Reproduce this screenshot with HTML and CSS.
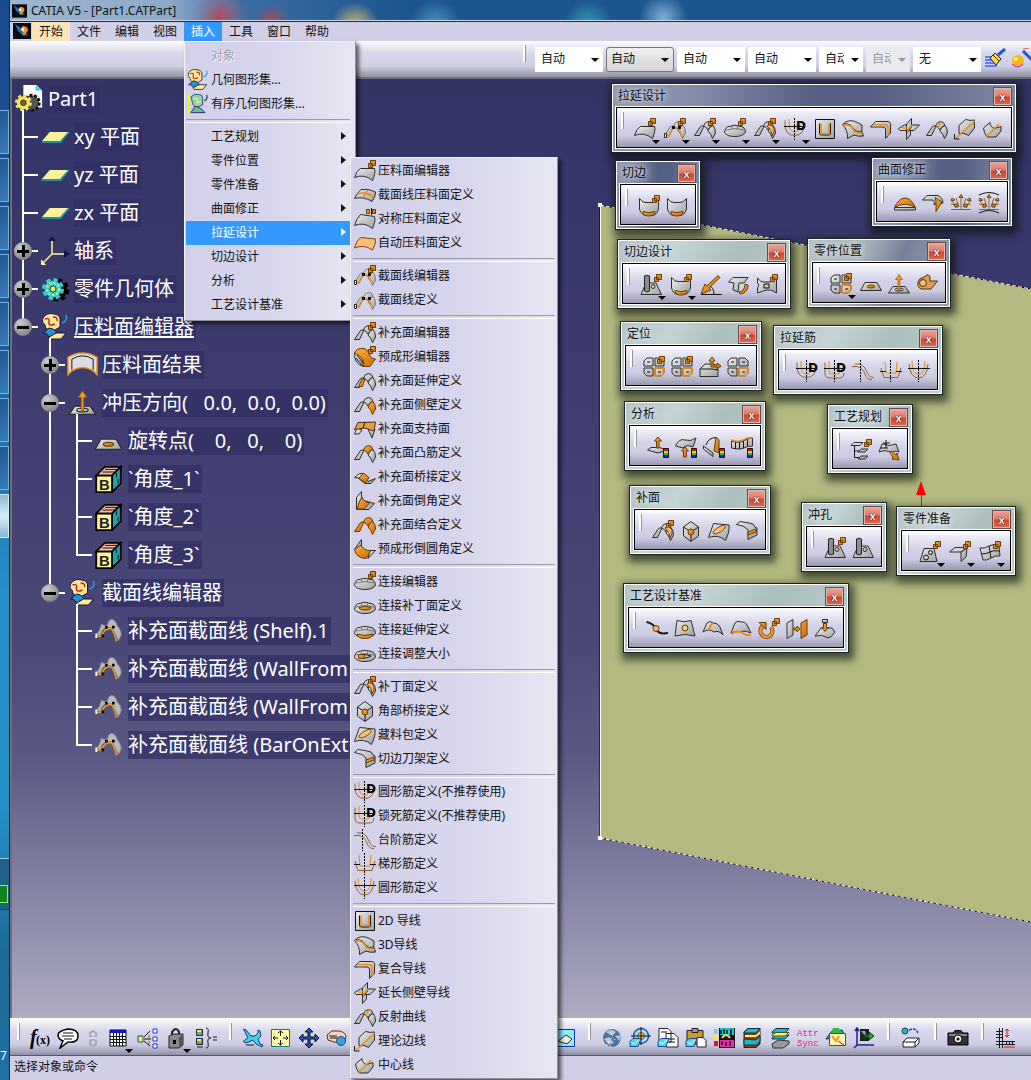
FILE: index.html
```html
<!DOCTYPE html>
<html lang="zh-CN">
<head>
  <meta charset="UTF-8">
  <meta name="viewport" content="width=device-width, initial-scale=1.0">
  <title>CATIA V5 - [Part1.CATPart]</title>
  <link rel="stylesheet" href="styles.css">
</head>
<body>

<svg class="paints" aria-hidden="true">
  <defs>
    <linearGradient id="steel" x1="0" y1="0" x2="1" y2="1"><stop offset="0" stop-color="#ececec"/><stop offset="1" stop-color="#9f9f9f"/></linearGradient>
    <linearGradient id="amber" x1="0" y1="0" x2="1" y2="1"><stop offset="0" stop-color="#ffb03a"/><stop offset="1" stop-color="#c96a00"/></linearGradient>
  </defs>
</svg>

<!-- 图标 -->
<svg class="sprite" aria-hidden="true">
  <defs>
    <g id="cubes"><path class="o" d="M16.500 .5h5v5h-5zM14.500 3.500h4v4h-4z"/></g>
    <g id="legL"><path d="M.5 17.500L6.500 8.500Q8 7.500 10 8L5.500 17.500z"/></g>
    <g id="arch"><path d="M9.500 8Q11 3.500 14.500 3.500Q18 3.500 19 7.500Q15.500 8 14 12Q12.500 9 9.500 8z"/></g>
    <g id="legR"><path d="M19 7.500Q21.500 10 21.500 15L18.500 20.500Q17 15.500 14 13Q15.500 8 19 7.500z"/></g>
    <g id="rainbow"><path fill="red" d="M17 13h4v3h-4z"/><path fill="#fd0" d="M17 15h4v2h-4z"/><path fill="#0c4" d="M17 17h4v2h-4z"/><path fill="#11f" d="M17 19h4v2h-4z"/><path class="l" d="M16.500 12.500h5v9h-5z"/></g>
    <g id="mail"><path fill="#55d4ec" stroke="#124a9a" d="M1 14.500L4 11.500h8L9 19.500H1z"/><path fill="none" stroke="#fff" d="M2 15l3 2 5-4"/></g>
  </defs>

  <symbol id="i-app" viewBox="0 0 18 16"><path fill="#070b16" d="M0 0h18v16H0z"/><path fill="#2c6ea8" d="M2 1L8 5L15 12L11 13L5 8z"/><path fill="#ff8a1c" d="M9 3Q15 3 15 7Q13 12 9 12Q12 8 9 3z"/><path fill="#fff4c0" d="M9 4Q12 5 11 9L8 7z"/></symbol>
  <symbol id="i-sheet-ed" viewBox="0 0 22 22"><path class="g" d="M.5 17.500Q2 11 6.500 8.500L20.500 8.500Q22 12 18.500 20.500Q10 13.500 .5 17.500z"/><use href="#cubes"/></symbol>
  <symbol id="i-sheet-cross" viewBox="0 0 22 22"><path class="g" d="M.5 14.500Q3 9 7 5.500Q14 4 21.500 8Q21.500 13 18 17.500Q9 12 .5 14.500z"/><path class="ol" d="M3.500 10Q12 7 20 13M14 6Q10.500 9 9.500 14"/></symbol>
  <symbol id="i-sheet-sym" viewBox="0 0 22 22"><path class="g" d="M.5 17.500Q2 11 6.500 6.500L20.500 8.500Q22 12 18.500 20.500Q10 13.500 .5 17.500z"/><path class="o" d="M12.500 1.500h3v4h-3zM18.500 1.500h3v4h-3z"/><path class="l" d="M17.500 0v7"/></symbol>
  <symbol id="i-sheet-auto" viewBox="0 0 22 22"><path fill="#f9bd74" stroke="#7a4a10" d="M.5 16Q2 9 6.500 5.500L21.500 7Q22 12 18.500 18Q10 12 .5 16z"/></symbol>
  <symbol id="i-sec" viewBox="0 0 22 22"><g class="g soft"><use href="#legL"/><use href="#arch"/><use href="#legR"/></g><path class="ol" d="M2 18h3L9 10h6L18 19"/><path fill="#111" d="M8 8h3v3H8zM14 8h3v3h-3z"/><path fill="#fff" stroke="#222" d="M.5 15.500h2v4h-2z"/></symbol>
  <symbol id="i-sec-ed" viewBox="0 0 22 22"><use href="#i-sec"/><use href="#cubes"/></symbol>
  <symbol id="i-add-ed" viewBox="0 0 22 22"><g class="g"><use href="#legL"/><use href="#arch"/><use href="#legR"/></g><use href="#cubes"/></symbol>
  <symbol id="i-preform" viewBox="0 0 22 22"><path class="g" d="M.5 7Q10 8 9.500 20.500Q0 18 .5 7z"/><path class="l" d="M2 12l6 7M3 9l6 8"/><path class="o" d="M.5 7Q3 1.500 10 2.500Q15 4 16 10Q18 13 21.500 13L16 20.500H9Q12 12 .5 7z"/><use href="#cubes"/></symbol>
  <symbol id="i-add-ext" viewBox="0 0 22 22"><g class="g"><use href="#legL"/><use href="#arch"/><use href="#legR"/></g><path class="o" d="M4.500 16.500L8 9h3L8.500 16.500z"/></symbol>
  <symbol id="i-add-wall" viewBox="0 0 22 22"><g class="g"><use href="#legL"/><use href="#arch"/></g><g class="o"><use href="#legR"/></g></symbol>
  <symbol id="i-add-sup" viewBox="0 0 22 22"><path class="g" d="M3 10L.5 16H5L8 12zM14 11l4 9 3-9z"/><path fill="#e0a04a" stroke="#4f3210" d="M4 4.500L21.500 4L20 13L11 10L.5 11.500z"/><path class="l" d="M11 4l-2 6"/></symbol>
  <symbol id="i-add-bar" viewBox="0 0 22 22"><g class="g"><use href="#legL"/><use href="#legR"/></g><g class="o"><use href="#arch"/></g></symbol>
  <symbol id="i-add-bridge" viewBox="0 0 22 22"><path class="g" d="M.5 11.500L5.500 7.500H9L14 15.500L21.500 12.500L17 17.500H11L4 12z"/><path class="o" d="M9.500 7L15 11.500L11.500 17L5 12z"/></symbol>
  <symbol id="i-add-fillet" viewBox="0 0 22 22"><path class="g" d="M2.500 19.500V7.500L7.500 1.500V10L20.500 13.500L15 19.500z"/><path class="o" d="M8 7Q10 13 16 12.500L10 19H3Q5 11 8 7z"/></symbol>
  <symbol id="i-add-join" viewBox="0 0 22 22"><g class="o"><use href="#legL"/><use href="#arch"/><use href="#legR"/></g></symbol>
  <symbol id="i-add-round" viewBox="0 0 22 22"><path class="g" d="M.5 11.500L7.500 1.500V9z"/><path class="g" d="M16 12.500h5.500L14 20.500z"/><path class="o" d="M.5 11.500L7 7Q10 13 17 12.500L12 20.500Q2 20 .5 11.500z"/></symbol>
  <symbol id="i-con" viewBox="0 0 22 22"><path class="g" d="M.5 14.500Q1 9 5 8.500Q11 6 17 8.500Q21 9 21.500 14Q19 18.500 11 18.500Q3 18.500 .5 14.500z"/><path class="l soft" d="M2 12Q11 9 20 12M7 8l1 3M14 8l-1 3"/></symbol>
  <symbol id="i-con-ed" viewBox="0 0 22 22"><use href="#i-con"/><use href="#cubes"/></symbol>
  <symbol id="i-con-patch" viewBox="0 0 22 22"><use href="#i-con"/><path class="o" d="M5 12.500Q11 10 17 12.500Q17 15 11 15Q5 15 5 12.500z"/></symbol>
  <symbol id="i-con-ext" viewBox="0 0 22 22"><use href="#i-con"/><path class="o" d="M3 15Q11 18 19 15Q18 19.500 11 19.500Q4 19.500 3 15z"/></symbol>
  <symbol id="i-con-size" viewBox="0 0 22 22"><use href="#i-con"/><path class="l" d="M6 13Q11 10 17 13Q11 17 6 13z"/><path class="o" d="M4.500 11.500h6v4h-6z"/></symbol>
  <symbol id="i-patch" viewBox="0 0 22 22"><use href="#i-add-ed"/><path fill="#f3b36b" stroke="#6b4010" d="M13 8Q17 5 20 10Q21 13 18 18Q18 12 13 8z"/></symbol>
  <symbol id="i-corner" viewBox="0 0 22 22"><path class="g" d="M11 1.500L18.500 7V16L11 21.500L3.500 16V7z"/><path class="l" d="M3.500 7L11 12L18.500 7M11 12v9"/><circle class="o" cx="11" cy="12" r="3"/></symbol>
  <symbol id="i-pocket" viewBox="0 0 22 22"><path class="g" d="M.5 17.500L5.500 3.500L21 5Q22 11 17.500 20.500Q10 14 .5 17.500z"/><path fill="#f8bd76" stroke="#7a4a10" d="M5 12Q7 8 14 5.500Q18 5 17 8Q14 12 8 14Q4 14 5 12z"/></symbol>
  <symbol id="i-knife" viewBox="0 0 22 22"><path class="g" d="M.5 4.500L4 1.500L13 3Q18 3 19 7L21 8V15L12 19.500V10L8 6.500z"/><path class="o" d="M12 12l8-3v3l-8 3z"/></symbol>
  <symbol id="i-beadD" viewBox="0 0 22 22"><path class="bl" d="M1 2.500v3Q1 17.500 10.500 17.500T20 6"/><path class="ol thin" d="M5 1v4Q5 14 10.500 14T16 6"/><path class="l" d="M0 8.500h20"/><path class="dash" d="M10.500 0v22"/><text class="iconD" x="12" y="12">D</text></symbol>
  <symbol id="i-lockD" viewBox="0 0 22 22"><path class="bl" d="M1 2.500V13Q1 18 6 18H15Q20 18 20 13"/><path class="ol thin" d="M5 1v10q0 3 3 3h5q3 0 3-3"/><path class="l" d="M0 8.500h20"/><path class="dash" d="M10.500 0v22"/><text class="iconD" x="12" y="12">D</text></symbol>
  <symbol id="i-step" viewBox="0 0 22 22"><path class="bl" d="M0 6.500H5Q11 8 13 14T20 19.500M3 4h5Q13 6 15 12T22 17.500"/><path class="dash" d="M8.500 0v22"/></symbol>
  <symbol id="i-trap" viewBox="0 0 22 22"><path class="ol thin" d="M5 2L6 13h10l1-11"/><path class="bl" d="M1 8L4 17.500H18L21 8"/><path class="l" d="M0 11.500h6M16 11.500h6"/><path class="dash" d="M10.500 0v22"/></symbol>
  <symbol id="i-bead" viewBox="0 0 22 22"><path class="bl" d="M1 4Q2 17.500 10.500 18Q19 17.500 20 4"/><path class="ol thin" d="M4 1Q4 14 10.500 14.500Q17 14 17 1"/><path class="l" d="M0 8.500h22"/><path class="dash" d="M10.500 0v22"/></symbol>
  <symbol id="i-2d" viewBox="0 0 22 22"><path fill="url(#steel)" stroke="#111" d="M1.500 1.500h19v19h-19z"/><path class="l" d="M5.500 5.500V15q0 2 2 2H14.500q2 0 2-2V5"/><path class="ol" d="M7 5.500V15.500H15V5.500"/></symbol>
  <symbol id="i-3d" viewBox="0 0 22 22"><path class="g" d="M.5 6.500Q7 0 15.500 4.500L20 7Q19 14 21.500 18Q16 19 12 17L5.500 20.500Q6 12 .5 6.500z"/><path class="l" d="M2 6Q8 5 11 10T20 13"/><path class="ol" d="M2 7Q8 6 11 11T20 14"/></symbol>
  <symbol id="i-comp" viewBox="0 0 22 22"><path class="g" d="M.5 9L5.500 3.500H18Q21.500 4 20.500 9V15L15.500 20.500V11Q15 8.500 12 9z"/><path class="ol" d="M3 6.500H15Q18 7 18 11v7"/></symbol>
  <symbol id="i-wallline" viewBox="0 0 22 22"><path class="g" d="M.5 10.500L6.500 7H21.500L16 12.500H2zM8.500 12.500L12.500 12V17L8.500 21.500z"/><path class="g" d="M13.500 .5V9L8.500 15V6z"/><path class="ol" d="M14 7l-5 6M4 10h5"/></symbol>
  <symbol id="i-reflect" viewBox="0 0 22 22"><g class="g"><use href="#legL"/><use href="#arch"/><use href="#legR"/></g><path class="ol" d="M12 10Q13 4 17 3.500"/></symbol>
  <symbol id="i-theory" viewBox="0 0 22 22"><path class="g" d="M5 7.500L11.500 1.500Q16 3 20.500 2V10L14.500 17.500Q10 14 5 15.500z"/><path class="ol" d="M2 20L21 3"/><path class="l" d="M.5 16v5h5"/></symbol>
  <symbol id="i-center" viewBox="0 0 22 22"><path class="g" d="M1.500 10L8 4.500Q8 9 12.500 10.500L19 8.500V13L14 19H5Q2 15 1.500 10z"/><path class="ol" d="M4 19L17 6"/></symbol>

  <symbol id="i-trim" viewBox="0 0 22 22"><path class="g" d="M1.500 3.500Q5 8 8 7.500H14Q17 8 20.500 3.500V14Q19 20 14 20.500H8Q3 20 1.500 14z"/><path class="o" d="M5 16.500Q11 19 17 16.500Q17 21 11 21T5 16.500z"/></symbol>
  <symbol id="i-trim-ed" viewBox="0 0 22 22"><use href="#i-trim"/><use href="#cubes"/></symbol>
  <symbol id="i-dome" viewBox="0 0 22 22"><path class="g" d="M.5 15.500h21v2.500h-21z"/><path class="o" d="M.5 15.500Q5 6 11 6T21.500 15.500Q11 9 .5 15.500z"/></symbol>
  <symbol id="i-turn" viewBox="0 0 22 22"><path class="g" d="M.5 8L5 3.500H16Q21 6 21 11L12 12.500Q13 8 10 8z"/><path class="o" d="M13 5.500L20 10L14 19.500V9z"/></symbol>
  <symbol id="i-morph" viewBox="0 0 22 22"><path class="bn" d="M1 17.500h20M2 8l4 8M20 8l-4 8M11 4v13M6 6l3 9M16 6l-3 9M1 12l4 1M21 12l-4 1"/><path fill="#d79237" stroke="#6e4413" d="M9 5.500l2-3 2 3zM1 9l1-3 3 2zM21 9l-1-3-3 2zM5 12h3v3H5zM14 12h3v3h-3z"/></symbol>
  <symbol id="i-morph2" viewBox="0 0 22 22"><use href="#i-morph"/><path class="l" d="M1 3Q11-2 21 3M1 21Q11 16 21 21"/></symbol>
  <symbol id="i-pierce" viewBox="0 0 22 22"><path class="g" d="M1 20.500L6 9H16L21.500 20.500z"/><circle class="g" cx="13" cy="12.500" r="2"/><path fill="#8d8d8d" stroke="#222" d="M4.500 2Q7 .5 9.500 2V17Q7 19 4.500 17z"/></symbol>
  <symbol id="i-pierce-ed" viewBox="0 0 22 22"><use href="#i-pierce"/><use href="#cubes"/></symbol>
  <symbol id="i-angle" viewBox="0 0 22 22"><path class="l" d="M1 20.500h21M9 11Q14 14 14 20"/><path class="o" d="M18 1.500L7 12L5 10L1 20L11 16L9 14L20 3.500z"/></symbol>
  <symbol id="i-fold" viewBox="0 0 22 22"><path class="g" d="M.5 8L5 3.500H20L16 9H11L10 18L5 16L6 9z"/><path class="o" d="M11 18Q17 17 17 10l3 1Q20 19 12 20z"/></symbol>
  <symbol id="i-camhole" viewBox="0 0 22 22"><path class="g" d="M1.500 4Q5 9 8 8H14Q17 8 20.500 4V19Q15 15 11 16T1.500 19V14L3 11L1.500 9z"/><path class="l" d="M8 10h5v4H8z"/><use href="#cubes"/></symbol>
  <symbol id="i-quad" viewBox="0 0 22 22"><path class="g" d="M1 5l3-3h6v8H1zM12 2h6l3 3v5h-9zM1 12h9v8H4l-3-3z"/><path class="g" d="M12 12h9v5l-3 3h-6z"/><path class="ol" d="M12 12h9v5l-3 3h-6z"/><path class="l" d="M4 6h3M15 6h3M4 16h3M15 16h3"/></symbol>
  <symbol id="i-quad-ed" viewBox="0 0 22 22"><use href="#i-quad"/><use href="#cubes"/></symbol>
  <symbol id="i-pivot" viewBox="0 0 22 22"><path class="g" d="M.5 17.500L5 9.500H17L21.500 17.500z"/><ellipse class="o" cx="11" cy="13.500" rx="4" ry="1.500"/></symbol>
  <symbol id="i-dir" viewBox="0 0 22 22"><path class="g" d="M.5 20L5 13.500H17L21.500 20z"/><ellipse class="g" cx="11" cy="16.500" rx="4.500" ry="1.500"/><path fill="#f39a25" stroke="#8a4b00" stroke-width=".6" d="M10 17V6.500H7.500L11 1.500L14.500 6.500H12V17z"/></symbol>
  <symbol id="i-roll" viewBox="0 0 22 22"><path fill="#dba050" stroke="#4f3210" d="M2 9Q3 5 8 4L12 1.500Q15 3 14 8H21.500L15 16H5Q1 14 2 9z"/><circle fill="#eebf7c" stroke="#4f3210" cx="7" cy="10" r="3.500"/></symbol>
  <symbol id="i-box" viewBox="0 0 22 22"><path class="g" d="M1 13L6 8H15L19 13V20.500H1z"/><path class="l" d="M1 13h12l6 1"/><path class="o" d="M12 11V5h-2l3-4 3 4h-2v4h4v-2l4 3-4 3v-2z"/></symbol>
  <symbol id="i-an1" viewBox="0 0 22 22"><path class="g" d="M.5 14L4 11.500H12L21 14L11 17z"/><path class="o" d="M9.500 12V5H7.500L11 1l3.500 4H12v7z"/><use href="#rainbow"/></symbol>
  <symbol id="i-an2" viewBox="0 0 22 22"><path class="g" d="M.5 10Q4 2 10 4T21 2L18 11Q11 8 8 12z"/><path class="o" d="M8.500 21v-6H6.500L10 11l3.500 4H11.500v6z"/><use href="#rainbow"/></symbol>
  <symbol id="i-an3" viewBox="0 0 22 22"><path class="g" d="M.5 10L10 17V20.500L.5 13z"/><path class="l" d="M3 9Q5 2 13 1.500"/><path class="o" d="M13 1l3 3v13l-5-2z"/><use href="#rainbow"/></symbol>
  <symbol id="i-an4" viewBox="0 0 22 22"><path class="g" d="M.5 12V5Q8 8 14 4Q18 2 21.500 2V10Q16 10 13 12T.5 12z"/><path class="ol" d="M.5 4Q8 7 14 3Q18 1 21.500 2"/><path class="l" d="M4.500 6v7M8.500 6v7M12.500 5v7M16.500 3v7"/><use href="#rainbow"/></symbol>
  <symbol id="i-plan" viewBox="0 0 22 22"><path class="g" d="M1 6.500L4 3.500H13L10 6.500zM8 13l3-3h7l-3 3zM8 20l3-3h7l-3 3z"/><path class="l" d="M4.500 7v11.500H9M4.500 12H9"/><use href="#cubes"/></symbol>
  <symbol id="i-plan2" viewBox="0 0 22 22"><path class="g" d="M1 13L4 5Q12 8 18 5L21 13Q16 11 14 14Q8 10 1 13z"/><path class="l" d="M8 1v8M5 4h7M3 9h7"/><path class="o" d="M13 12l5 4 1-2 2 7-7-1 1-2-3-4z"/></symbol>
  <symbol id="i-prep1" viewBox="0 0 22 22"><path class="g" d="M1 20.500L5 7.500H15L18 20.500z"/><circle class="l" cx="11.500" cy="11.500" r="2"/><circle class="l" cx="7" cy="16.500" r="2.500"/><use href="#cubes"/></symbol>
  <symbol id="i-prep2" viewBox="0 0 22 22"><path class="g" d="M.5 11L6 6.500H18L17 16L12 20.500V11z"/><path class="l" d="M12 11l6-4"/><use href="#cubes"/></symbol>
  <symbol id="i-prep3" viewBox="0 0 22 22"><path class="g" d="M1 7Q6 8 10 5T20 5L21 15Q17 14 12 17T4 19z"/><path class="l" d="M2 13Q8 13 11 11T20 10M10 5l2 12"/><use href="#cubes"/></symbol>
  <symbol id="i-ref1" viewBox="0 0 22 22"><path class="l fat" d="M.5 4Q7 5 10 11T22 15"/><circle fill="#f6b45d" stroke="#69400e" cx="10" cy="10.500" r="3"/></symbol>
  <symbol id="i-ref2" viewBox="0 0 22 22"><path class="g" d="M1 18L3 2.500Q10 5 17 2.500L21 18Q11 15 1 18z"/><circle fill="#f6c27d" stroke="#69400e" cx="11" cy="10" r="3"/></symbol>
  <symbol id="i-ref3" viewBox="0 0 22 22"><path class="g" d="M1 14L5 5Q8 2 11 5Q15 4 18 9L21 17Q17 12 12 14Q7 10 1 14z"/><path class="ol wide" d="M11 5Q7 8 7.500 12"/></symbol>
  <symbol id="i-ref4" viewBox="0 0 22 22"><path class="g" d="M1 15L5 5Q8 2 11 4Q15 3 17 7L21 15Q14 12 11 14Q7 12 1 15z"/><path class="ol wide" d="M1 16Q8 12 12 15T21 17"/></symbol>
  <symbol id="i-ref5" viewBox="0 0 22 22"><path fill="none" stroke="#6d3c00" stroke-width="4" d="M5 8A6 6 0 1 0 13 9"/><path fill="none" stroke="#f39a25" stroke-width="2.500" d="M5 8A6 6 0 1 0 13 9"/><path class="o" d="M1 4.500h7v7z"/><use href="#cubes"/></symbol>
  <symbol id="i-ref6" viewBox="0 0 22 22"><path class="g" d="M1 5L7 1.500V17L1 20.500z"/><path class="o" d="M15 5L21 1.500V17L15 20.500zM8 10h3V8l3 3-3 3v-2H8z"/></symbol>
  <symbol id="i-ref7" viewBox="0 0 22 22"><path class="g" d="M1 18L7 10H18L21 14Q17 20 14 20Q8 16 1 18z"/><path class="g" d="M8.500 1.500h5v3h-5z"/><path class="o" d="M9.500 5.500h3v4h2l-3.500 4-3.500-4h2z"/></symbol>

  <!-- 结构树 -->
  <symbol id="t-part" viewBox="0 0 32 32"><path fill="#fff" d="M10 1h14l6 6v18H14L10 12z"/><path fill="#3ccfe0" d="M23 1l7 6h-7z"/><circle cx="19" cy="20" r="8" fill="#555" stroke="#111" stroke-width="3" stroke-dasharray="3 2"/><circle cx="10" cy="20" r="7" fill="#f7e36b" stroke="#f7e36b" stroke-width="4" stroke-dasharray="3 2.500"/><circle cx="10" cy="20" r="3" fill="#77621d" stroke="#3b3000"/></symbol>
  <symbol id="t-plane" viewBox="0 0 28 28"><path fill="#1e90a0" d="M8 9h21L20 20H0z"/><path fill="#fff09a" d="M9 9h18L19 18H1z"/></symbol>
  <symbol id="t-axis" viewBox="0 0 28 28"><path fill="none" stroke="#fff09a" stroke-width="1.500" d="M11 3v14h13M11 17L2 26"/><path fill="#15154a" d="M7 4l4-5 4 5zM23 13l6 4-6 4z"/><path fill="#fff09a" d="M0 22v6h5z"/></symbol>
  <symbol id="t-gear" viewBox="0 0 28 28"><circle cx="17" cy="15" r="9" fill="#000" stroke="#000" stroke-width="5" stroke-dasharray="4 3"/><circle cx="12" cy="14" r="8.500" fill="#2ed0d8" stroke="#2ed0d8" stroke-width="5" stroke-dasharray="4 2.700"/><circle cx="12" cy="14" r="6" fill="none" stroke="#f5ef4c" stroke-width="2" stroke-dasharray="2 2"/><circle cx="12" cy="14" r="3" fill="#f5ef4c" stroke="#145"/></symbol>
  <symbol id="t-set" viewBox="0 0 28 28"><path fill="#ffe992" stroke="#15154a" d="M2 5Q6-1 13 1Q18 1 19 5V14L12 18Q4 17 4 12Q0 9 2 5z"/><path fill="none" stroke="#c3242c" stroke-width="1.500" d="M4 6Q9 4 8 9T14 11M12 4Q17 4 16 8"/><path fill="#2296c8" stroke="#15154a" d="M2 20L8 15Q13 15 16 20L8 24Q6 19 2 20z"/><path fill="#ffe992" stroke="#15154a" d="M8 24L15 20L25 20L20 26H9z"/><path fill="none" stroke="#22a9df" stroke-width="1.500" d="M21 10q6-2 4-8"/></symbol>
  <symbol id="t-oset" viewBox="0 0 28 28"><path stroke="#dfff20" stroke-width="2" d="M2 1v25"/><path fill="#93d0b4" stroke="#235" d="M5 5Q9 0 15 2Q20 2 20 6V15L13 18Q7 17 7 12z"/><path fill="none" stroke="#eef58a" stroke-width="1.500" d="M8 8q6-3 5 2t4 0"/><path fill="#6fb5a8" stroke="#15154a" d="M5 25L10 17Q16 17 23 25z"/><path fill="none" stroke="#246" stroke-width="1.500" d="M22 10q5-2 3-8"/></symbol>
  <symbol id="t-result" viewBox="0 0 32 28"><path fill="#ddd" stroke="#f09118" stroke-width="1.500" d="M1 6Q16-3 31 6V24L27 20Q16 13 5 20L1 24z"/><path class="l" d="M5 19V8Q16 1 27 8V19"/></symbol>
  <symbol id="t-cube" viewBox="0 0 32 32"><path fill="#f6b9a5" stroke="#000" stroke-width="2" d="M2 12L12 2H30L20 12z"/><path fill="#1aa3ad" stroke="#000" stroke-width="2" d="M20 12L30 2V21L20 31z"/><path fill="#fff09a" stroke="#000" stroke-width="2" d="M2 12H20V31H2z"/><path stroke="#000" fill="none" d="M9 8h15M12 5h15M25 9v5M27 16v5"/><text class="iconB" x="5" y="28">B</text></symbol>
  <symbol id="t-sec" viewBox="0 0 32 32"><path fill="#b9b9b9" stroke="#888" d="M2 20Q6 17 8 8Q11 11 15 9Q16 2 21 3Q25 5 26 10Q32 17 30 22L27 27Q23 16 19 12H13Q8 14 7 21z"/><path fill="none" stroke="#f2931d" stroke-width="1.800" d="M3 22H8Q11 13 19 13Q23 18 25 28"/><path d="M12 10h3v3h-3zM20 10h3v3h-3zM8 20h3v3H8z"/><path fill="#fff" d="M1 19h2v5H1z"/></symbol>

  <!-- 标准工具栏 -->
  <symbol id="b-brush" viewBox="0 0 22 22"><path stroke="#36f" stroke-width="1.500" d="M1 9h12M1 12h10M1 15h10M1 18h12"/><path fill="#fd3" stroke="#222" d="M6 10L11 5L17 11L12 17z"/><path stroke="#222" d="M9 7l6 6"/><path stroke="#25c" stroke-width="3" d="M14 7L21 1"/></symbol>
  <symbol id="b-wiz" viewBox="0 0 22 22"><circle cx="7" cy="13" r="6" fill="#f8b51c"/><circle cx="5" cy="11" r="2" fill="#fff36e"/><path fill="none" stroke="#b2d" d="M1 16q6 6 11 0"/><path stroke="#25c" stroke-width="3" d="M12 3l10 10"/><path stroke="#e55" d="M12 1l6-1"/></symbol>
  <symbol id="b-fx" viewBox="0 0 22 22"><text class="fx" x="1" y="17">f</text><text class="fx-arg" x="7" y="17">(x)</text></symbol>
  <symbol id="b-note" viewBox="0 0 22 22"><path fill="#fff" stroke="#000" stroke-width="1.500" d="M11 2Q21 2 21 9T11 15L3 21L6 14Q1 12 1 8T11 2z"/><path class="l" d="M6 6h10M5 9h12M7 12h8"/></symbol>
  <symbol id="b-chain" viewBox="0 0 22 22"><path fill="none" stroke="#aaa" stroke-width="2" d="M11 4l3 2v3l-3 2-3-2V6zM11 12l3 2v3l-3 2-3-2v-3z"/><path stroke="#fff" d="M9 11h5"/></symbol>
  <symbol id="b-table" viewBox="0 0 22 22"><path fill="#fff" stroke="#000" d="M3 3h16v16H3z"/><path fill="#11c" d="M3 3h16v3H3z"/><path class="l" d="M3 9.500h16M3 12.500h16M3 15.500h16M6.500 6v13M9.500 6v13M12.500 6v13M15.500 6v13"/></symbol>
  <symbol id="b-tree" viewBox="0 0 22 22"><path fill="#ffe36b" stroke="#157" d="M1 9h5v6H1z"/><path fill="#fff" stroke="#23d" d="M16 2h4v4h-4zM16 10h4v4h-4zM16 17h4v4h-4z"/><path class="l" d="M7 10l6-6M7 12h7M7 14l6 5"/><path stroke="#d22" d="M12 8v3M12 14v3"/></symbol>
  <symbol id="b-lock" viewBox="0 0 22 22"><path fill="none" stroke="#222" stroke-width="2" d="M7 9V5Q11-1 14 5v4"/><path fill="#888" stroke="#222" d="M4 9l4-2h10v11l-4 3H4z"/><path fill="#555" d="M14 10l4-2v10l-4 2z"/><path d="M8 13h3v4H8z"/></symbol>
  <symbol id="b-brace" viewBox="0 0 22 22"><path fill="#5aa" stroke="#222" d="M1.500 2.500h6v6h-6zM1.500 11.500h6v6h-6z"/><path fill="#fe5" d="M2 3h4v2H2zM2 12h4v2H2z"/><path class="l" d="M11 1q3 0 2 5t3 5q-4 0-3 5t-2 5M18 10h4M18 13h4M2 20h6"/></symbol>
  <symbol id="b-fly" viewBox="0 0 22 22"><path fill="#3bd6e8" stroke="#123a7a" d="M1.500 2L4 3L9 9L13 9L16 6V3L18 4L19 9L16 12L18 17L21 18L20 20L14 17L11 13L7 15L3 16L1.500 14L6 11z"/><path class="l" d="M4 18h8"/></symbol>
  <symbol id="b-fit" viewBox="0 0 22 22"><path fill="#ffffa6" stroke="#178" d="M1.500 2.500h18v17h-18z"/><path class="l" d="M10.500 4v5M8 6l2.500-2L13 6M10.500 18v-5M8 16l2.500 2 2.500-2M3 11h5M5 9l-2 2 2 2M18 11h-5M16 9l2 2-2 2"/></symbol>
  <symbol id="b-pan" viewBox="0 0 22 22"><path fill="#2a55c0" stroke="#012" d="M11 1l4 4h-3v5h5V7l4 4-4 4v-3h-5v5h3l-4 4-4-4h3v-5H5v3l-4-4 4-4v3h5V5H7z"/></symbol>
  <symbol id="b-rot" viewBox="0 0 22 22"><path fill="#f6d3b8" stroke="#6a2a1a" d="M1 8L6 4H13Q19 5 20 9L19 15H8L2 13z"/><path class="l" d="M3 9h8M4 11h9"/><circle cx="15" cy="14" r="4.500" fill="#35a0e6" stroke="#157"/></symbol>
  <symbol id="b-view" viewBox="0 0 22 22"><path fill="#8bf0fb" stroke="#13a" d="M1.500 2.500h19v17h-19z"/><path fill="#eed" stroke="#234" d="M4 14l8-6 6 4-5 5z"/></symbol>
  <symbol id="b-globe" viewBox="0 0 22 22"><circle cx="11" cy="11" r="9" fill="#4f719c"/><path fill="#b9c9dc" d="M5 5q6-4 10 0l-4 4zM3 12l5-2 4 5-4 3zM14 9l6-1-1 6z"/><path stroke="#fff" stroke-dasharray="2 2" d="M5 19L12 9M9 20l5-8"/></symbol>
  <symbol id="b-target" viewBox="0 0 22 22"><circle cx="12" cy="9" r="7.500" fill="#9fe4f0" stroke="#25c" stroke-width="1.500"/><circle cx="12" cy="9" r="3.500" fill="#f7b451" stroke="#a52"/><path class="l" d="M12 0v18M2 9h20"/><use href="#mail"/></symbol>
  <symbol id="b-docs" viewBox="0 0 22 22"><path fill="#fff" stroke="#222" d="M2 1.500h9l3 3V15H2zM9 6.500h8l4 4V20H9z"/><path class="l" d="M4 5h6M12 12h6M12 15h6"/><use href="#mail"/></symbol>
  <symbol id="b-paste" viewBox="0 0 22 22"><path fill="#c79b2c" stroke="#222" d="M2 3.500h16V17H2z"/><path fill="#999" stroke="#222" d="M7 1.500h6v4H7z"/><path fill="#fff" stroke="#222" d="M12 10.500h6l3 3V20h-9z"/><use href="#mail"/></symbol>
  <symbol id="b-onoff" viewBox="0 0 22 22"><path fill="#111" d="M6 1h16v20H6z"/><path fill="#22c3cf" d="M7 1h14v7H7z"/><path fill="#e52fb0" d="M7 13h14v7H7z"/><path fill="#8cd" d="M1 2h4v5H1z"/><path fill="#fe3" d="M1 8h4v5H1z"/><path fill="#e11" d="M1 14h4v5H1z"/><path stroke="#111" stroke-width="1.500" d="M8 3v4M11 2v5M14 3v4M18 2v6M9 14v4M13 15v4M17 14v5"/><path fill="none" stroke="#f5d84c" stroke-width="2" d="M9 11q4-6 8 0"/></symbol>
  <symbol id="b-layers" viewBox="0 0 22 22"><path fill="#8a4210" stroke="#13245a" d="M3 5L7 1.500H19V17L15 20.500H3z"/><path fill="#1fb8c4" stroke="#134" d="M3 5l4-3.500h12L15 6H3zM3 12l12 1 4-4v5l-4 4H3z"/><path fill="#fe6" d="M4 8h11l4-4v3l-4 3H4z"/></symbol>
  <symbol id="b-layers2" viewBox="0 0 22 22"><path fill="#1fb8c4" stroke="#134" d="M3 5l4-3.500h13L16 6H3zM3 11l4-3h13l-4 4H3z"/><path fill="#fe6" stroke="#553" d="M3 8l4-2.500h13L16 9H3z"/><path fill="#999" stroke="#333" d="M3 17l6-4 11 1v3l-6 4H4z"/></symbol>
  <symbol id="b-attr" viewBox="0 0 22 22"><text class="attr" x="0" y="9">Attr</text><text class="attr" x="0" y="19">Sync</text></symbol>
  <symbol id="b-sketch" viewBox="0 0 22 22"><path fill="#22b0e0" stroke="#125" d="M1 12L7 4L17 3L20 9z"/><path fill="#3b3" d="M8 1h6l2 5H6z"/><path fill="#fff5b8" stroke="#a22" d="M4.500 6.500h16v12h-16z"/><path fill="none" stroke="#e90" stroke-width="2" d="M7 9l4 5 3-5"/><path stroke="#a22" d="M13 14l6 4"/></symbol>
  <symbol id="b-frame" viewBox="0 0 22 22"><path fill="none" stroke="#13288a" stroke-width="1.500" d="M4 2v16h17M4 18l-3 3M2 4l2-3 2 3"/><path fill="#222" d="M7 2h9v12H7z"/><path fill="#8ac" d="M8 4l6 7-2-7z"/><path fill="#2a3" stroke="#131" d="M11 8h5V5l5 4-5 4v-3h-5z"/></symbol>
  <symbol id="b-iso" viewBox="0 0 22 22"><circle cx="5" cy="4" r="3" fill="#2ab5c5" stroke="#146"/><path fill="none" stroke="#24c" stroke-width="1.500" stroke-dasharray="3 1" d="M9 3q8-3 9 4"/><path fill="#fff" stroke="#222" d="M3 15l4-4h12v5l-4 4H3z"/><path class="l" d="M3 15h12l4-4M15 15v5"/></symbol>
  <symbol id="b-cam" viewBox="0 0 22 22"><path fill="#333" stroke="#000" d="M1 6h5l2-2.500h6L16 6h5v12H1z"/><path stroke="#ddd" d="M2 8h18"/><circle cx="11" cy="12" r="4" fill="#eee" stroke="#000"/><circle cx="11" cy="12" r="1.500"/></symbol>
  <symbol id="b-meas" viewBox="0 0 22 22"><path class="l" d="M5.500 1v20M8.500 1v20M2 4.500h6M2 7.500h6M2 10.500h6M2 14.500h19M2 17.500h6M9 17.500h12M12.500 14v3M15.500 14v3M18.500 14v3"/><path stroke="#c11" d="M13 2v8M11 4l2-2 2 2M11 8l2 2 2-2M10 20h11" fill="none"/></symbol>
</svg>

<aside class="taskbar">
  <span class="task t1"></span><span class="task"></span><span class="task"></span><span class="task"></span><span class="task"></span>
  <span class="task"></span><span class="task"></span><span class="task"></span><span class="task active"></span>
  <span class="tray"><i class="battery"></i></span>
  <span class="clock">7</span>
</aside>

<div class="app">
  <header class="titlebar">
    <svg class="app-icon"><use href="#i-app"/></svg>
    <span>CATIA V5 - [Part1.CATPart]</span>
  </header>

  <nav class="menubar">
    <svg class="app-icon"><use href="#i-app"/></svg>
    <div class="menu-item"><button class="start">开始</button></div>
    <div class="menu-item"><button>文件</button></div>
    <div class="menu-item"><button>编辑</button></div>
    <div class="menu-item"><button>视图</button></div>
    <div class="menu-item">
      <button class="open">插入</button>
      <ul class="menu">
        <li><button disabled>对象</button></li>
        <li><button><svg><use href="#t-set"/></svg>几何图形集...</button></li>
        <li><button><svg><use href="#t-oset"/></svg>有序几何图形集...</button></li>
        <li class="sep"></li>
        <li><button class="more">工艺规划</button></li>
        <li><button class="more">零件位置</button></li>
        <li><button class="more">零件准备</button></li>
        <li><button class="more">曲面修正</button></li>
        <li>
          <button class="more current">拉延设计</button>
          <ul class="menu submenu">
            <li><button><svg><use href="#i-sheet-ed"/></svg>压料面编辑器</button></li>
            <li><button><svg><use href="#i-sheet-cross"/></svg>截面线压料面定义</button></li>
            <li><button><svg><use href="#i-sheet-sym"/></svg>对称压料面定义</button></li>
            <li><button><svg><use href="#i-sheet-auto"/></svg>自动压料面定义</button></li>
            <li class="sep"></li>
            <li><button><svg><use href="#i-sec-ed"/></svg>截面线编辑器</button></li>
            <li><button><svg><use href="#i-sec"/></svg>截面线定义</button></li>
            <li class="sep"></li>
            <li><button><svg><use href="#i-add-ed"/></svg>补充面编辑器</button></li>
            <li><button><svg><use href="#i-preform"/></svg>预成形编辑器</button></li>
            <li><button><svg><use href="#i-add-ext"/></svg>补充面延伸定义</button></li>
            <li><button><svg><use href="#i-add-wall"/></svg>补充面侧壁定义</button></li>
            <li><button><svg><use href="#i-add-sup"/></svg>补充面支持面</button></li>
            <li><button><svg><use href="#i-add-bar"/></svg>补充面凸筋定义</button></li>
            <li><button><svg><use href="#i-add-bridge"/></svg>补充面桥接定义</button></li>
            <li><button><svg><use href="#i-add-fillet"/></svg>补充面倒角定义</button></li>
            <li><button><svg><use href="#i-add-join"/></svg>补充面结合定义</button></li>
            <li><button><svg><use href="#i-add-round"/></svg>预成形倒圆角定义</button></li>
            <li class="sep"></li>
            <li><button><svg><use href="#i-con-ed"/></svg>连接编辑器</button></li>
            <li><button><svg><use href="#i-con-patch"/></svg>连接补丁面定义</button></li>
            <li><button><svg><use href="#i-con-ext"/></svg>连接延伸定义</button></li>
            <li><button><svg><use href="#i-con-size"/></svg>连接调整大小</button></li>
            <li class="sep"></li>
            <li><button><svg><use href="#i-patch"/></svg>补丁面定义</button></li>
            <li><button><svg><use href="#i-corner"/></svg>角部桥接定义</button></li>
            <li><button><svg><use href="#i-pocket"/></svg>藏料包定义</button></li>
            <li><button><svg><use href="#i-knife"/></svg>切边刀架定义</button></li>
            <li class="sep"></li>
            <li><button><svg><use href="#i-beadD"/></svg>圆形筋定义(不推荐使用)</button></li>
            <li><button><svg><use href="#i-lockD"/></svg>锁死筋定义(不推荐使用)</button></li>
            <li><button><svg><use href="#i-step"/></svg>台阶筋定义</button></li>
            <li><button><svg><use href="#i-trap"/></svg>梯形筋定义</button></li>
            <li><button><svg><use href="#i-bead"/></svg>圆形筋定义</button></li>
            <li class="sep"></li>
            <li><button><svg><use href="#i-2d"/></svg>2D 导线</button></li>
            <li><button><svg><use href="#i-3d"/></svg>3D导线</button></li>
            <li><button><svg><use href="#i-comp"/></svg>复合导线</button></li>
            <li><button><svg><use href="#i-wallline"/></svg>延长侧壁导线</button></li>
            <li><button><svg><use href="#i-reflect"/></svg>反射曲线</button></li>
            <li><button><svg><use href="#i-theory"/></svg>理论边线</button></li>
            <li><button><svg><use href="#i-center"/></svg>中心线</button></li>
          </ul>
        </li>
        <li><button class="more">切边设计</button></li>
        <li><button class="more">分析</button></li>
        <li><button class="more">工艺设计基准</button></li>
      </ul>
    </div>
    <div class="menu-item"><button>工具</button></div>
    <div class="menu-item"><button>窗口</button></div>
    <div class="menu-item"><button>帮助</button></div>
  </nav>

  <div class="toolbar top">
    <span class="grip"></span>
    <label class="pick"><select aria-label="填充颜色"><option>自动</option></select></label>
    <label class="pick raised"><select aria-label="透明度"><option>自动</option></select></label>
    <label class="pick"><select aria-label="线宽"><option>自动</option></select></label>
    <label class="pick"><select aria-label="线型"><option>自动</option></select></label>
    <label class="pick short"><select aria-label="点符号"><option>自动</option></select></label>
    <label class="pick short off"><select aria-label="渲染样式" disabled><option>自动</option></select></label>
    <label class="pick"><select aria-label="层"><option>无</option></select></label>
    <button class="tool" aria-label="格式刷"><svg><use href="#b-brush"/></svg></button>
    <button class="tool" aria-label="向导"><svg><use href="#b-wiz"/></svg></button>
  </div>

  <main class="viewport">
    <!-- 毛坯平面 -->
    <svg class="scene">
      <path fill="#b3b980" d="M590 126L2000 401V1034L590 759z"/>
      <path fill="none" stroke="#000" d="M2000 401L590 126V759L2000 1034"/>
      <path fill="none" stroke="#fff" stroke-dasharray="4 2" d="M590 126L2000 401M590 759L2000 1034"/>
      <path stroke="#fff" d="M590.500 126V759"/>
      <path fill="#fff" d="M588 124h4v4h-4zM588 757h4v4h-4z"/>
      <path fill="red" d="M911 402L916 416H906z"/>
      <path stroke="#c02020" d="M911.500 416V430"/>
    </svg>

    <ul class="tree root">
      <li class="part"><div class="row"><svg><use href="#t-part"/></svg><span>Part1</span></div></li>
      <li><div class="row"><svg><use href="#t-plane"/></svg><span>xy 平面</span></div></li>
      <li><div class="row"><svg><use href="#t-plane"/></svg><span>yz 平面</span></div></li>
      <li><div class="row"><svg><use href="#t-plane"/></svg><span>zx 平面</span></div></li>
      <li><div class="row"><button class="knob plus" aria-label="展开"></button><svg><use href="#t-axis"/></svg><span>轴系</span></div></li>
      <li><div class="row"><button class="knob plus" aria-label="展开"></button><svg><use href="#t-gear"/></svg><span>零件几何体</span></div></li>
      <li>
        <div class="row"><button class="knob" aria-label="折叠"></button><svg><use href="#t-set"/></svg><span class="active">压料面编辑器</span></div>
        <ul class="tree">
          <li><div class="row"><button class="knob plus" aria-label="展开"></button><svg><use href="#t-result"/></svg><span>压料面结果</span></div></li>
          <li>
            <div class="row"><button class="knob" aria-label="折叠"></button><svg><use href="#i-dir"/></svg><span>冲压方向(   0.0,  0.0,  0.0)</span></div>
            <ul class="tree">
              <li><div class="row"><svg><use href="#i-pivot"/></svg><span>旋转点(    0,   0,    0)</span></div></li>
              <li><div class="row"><svg><use href="#t-cube"/></svg><span>`角度_1`</span></div></li>
              <li><div class="row"><svg><use href="#t-cube"/></svg><span>`角度_2`</span></div></li>
              <li><div class="row"><svg><use href="#t-cube"/></svg><span>`角度_3`</span></div></li>
            </ul>
          </li>
          <li>
            <div class="row"><button class="knob" aria-label="折叠"></button><svg><use href="#t-set"/></svg><span>截面线编辑器</span></div>
            <ul class="tree">
              <li><div class="row"><svg><use href="#t-sec"/></svg><span>补充面截面线 (Shelf).1</span></div></li>
              <li><div class="row"><svg><use href="#t-sec"/></svg><span>补充面截面线 (WallFrom</span></div></li>
              <li><div class="row"><svg><use href="#t-sec"/></svg><span>补充面截面线 (WallFrom</span></div></li>
              <li><div class="row"><svg><use href="#t-sec"/></svg><span>补充面截面线 (BarOnExt</span></div></li>
            </ul>
          </li>
        </ul>
      </li>
    </ul>
  </main>

  <div class="toolbar bottom">
    <span class="grip"></span>
    <button class="tool" aria-label="公式"><svg><use href="#b-fx"/></svg></button>
    <button class="tool" aria-label="注释"><svg><use href="#b-note"/></svg></button>
    <button class="tool thin" aria-label="链接" disabled><svg><use href="#b-chain"/></svg></button>
    <button class="tool drop" aria-label="设计表"><svg><use href="#b-table"/></svg></button>
    <button class="tool" aria-label="关系"><svg><use href="#b-tree"/></svg></button>
    <button class="tool drop" aria-label="锁定"><svg><use href="#b-lock"/></svg></button>
    <button class="tool" aria-label="等效尺寸"><svg><use href="#b-brace"/></svg></button>
    <span class="grip"></span>
    <button class="tool" aria-label="飞行模式"><svg><use href="#b-fly"/></svg></button>
    <button class="tool" aria-label="全部适应"><svg><use href="#b-fit"/></svg></button>
    <button class="tool" aria-label="平移"><svg><use href="#b-pan"/></svg></button>
    <button class="tool" aria-label="旋转"><svg><use href="#b-rot"/></svg></button>
    <span class="gap"></span>
    <button class="tool" aria-label="视图"><svg><use href="#b-view"/></svg></button>
    <span class="grip"></span>
    <button class="tool" aria-label="更新"><svg><use href="#b-globe"/></svg></button>
    <button class="tool" aria-label="目标"><svg><use href="#b-target"/></svg></button>
    <button class="tool" aria-label="复制"><svg><use href="#b-docs"/></svg></button>
    <button class="tool" aria-label="粘贴"><svg><use href="#b-paste"/></svg></button>
    <button class="tool" aria-label="开关"><svg><use href="#b-onoff"/></svg></button>
    <button class="tool" aria-label="层"><svg><use href="#b-layers"/></svg></button>
    <button class="tool" aria-label="层过滤"><svg><use href="#b-layers2"/></svg></button>
    <button class="tool" aria-label="属性同步"><svg><use href="#b-attr"/></svg></button>
    <button class="tool" aria-label="目录"><svg><use href="#b-sketch"/></svg></button>
    <button class="tool" aria-label="轴系"><svg><use href="#b-frame"/></svg></button>
    <span class="grip"></span>
    <button class="tool" aria-label="等轴视图"><svg><use href="#b-iso"/></svg></button>
    <span class="grip"></span>
    <button class="tool" aria-label="捕获"><svg><use href="#b-cam"/></svg></button>
    <span class="grip"></span>
    <button class="tool" aria-label="测量"><svg><use href="#b-meas"/></svg></button>
  </div>

  <footer class="status">选择对象或命令</footer>
</div>

<!-- 浮动工具栏 -->
<section class="palette navy p-draw">
  <header><h2>拉延设计</h2><button class="close" aria-label="关闭">x</button></header>
  <div class="tools"><span class="grip"></span>
    <button class="tool drop" aria-label="压料面编辑器"><svg><use href="#i-sheet-ed"/></svg></button>
    <button class="tool drop" aria-label="截面线编辑器"><svg><use href="#i-sec-ed"/></svg></button>
    <button class="tool drop" aria-label="补充面编辑器"><svg><use href="#i-add-ed"/></svg></button>
    <button class="tool drop" aria-label="连接编辑器"><svg><use href="#i-con-ed"/></svg></button>
    <button class="tool drop" aria-label="补丁面定义"><svg><use href="#i-patch"/></svg></button>
    <button class="tool drop" aria-label="圆形筋定义"><svg><use href="#i-beadD"/></svg></button>
    <button class="tool" aria-label="2D 导线"><svg><use href="#i-2d"/></svg></button>
    <button class="tool" aria-label="3D导线"><svg><use href="#i-3d"/></svg></button>
    <button class="tool" aria-label="复合导线"><svg><use href="#i-comp"/></svg></button>
    <button class="tool" aria-label="延长侧壁导线"><svg><use href="#i-wallline"/></svg></button>
    <button class="tool" aria-label="反射曲线"><svg><use href="#i-reflect"/></svg></button>
    <button class="tool" aria-label="理论边线"><svg><use href="#i-theory"/></svg></button>
    <button class="tool" aria-label="中心线"><svg><use href="#i-center"/></svg></button>
  </div>
</section>

<section class="palette navy p-trim">
  <header><h2>切边</h2><button class="close" aria-label="关闭">x</button></header>
  <div class="tools"><span class="grip"></span>
    <button class="tool" aria-label="切边编辑器"><svg><use href="#i-trim-ed"/></svg></button>
    <button class="tool" aria-label="切边定义"><svg><use href="#i-trim"/></svg></button>
  </div>
</section>

<section class="palette navy p-fix">
  <header><h2>曲面修正</h2><button class="close" aria-label="关闭">x</button></header>
  <div class="tools"><span class="grip"></span>
    <button class="tool" aria-label="过拉"><svg><use href="#i-dome"/></svg></button>
    <button class="tool" aria-label="翻转"><svg><use href="#i-turn"/></svg></button>
    <button class="tool" aria-label="变形"><svg><use href="#i-morph"/></svg></button>
    <button class="tool" aria-label="曲面变形"><svg><use href="#i-morph2"/></svg></button>
  </div>
</section>

<section class="palette p-trimdesign">
  <header><h2>切边设计</h2><button class="close" aria-label="关闭">x</button></header>
  <div class="tools"><span class="grip"></span>
    <button class="tool drop" aria-label="冲孔"><svg><use href="#i-pierce-ed"/></svg></button>
    <button class="tool drop" aria-label="切边"><svg><use href="#i-trim-ed"/></svg></button>
    <button class="tool" aria-label="角度"><svg><use href="#i-angle"/></svg></button>
    <button class="tool" aria-label="翻边"><svg><use href="#i-fold"/></svg></button>
    <button class="tool" aria-label="斜楔"><svg><use href="#i-camhole"/></svg></button>
  </div>
</section>

<section class="palette half p-position">
  <header><h2>零件位置</h2><button class="close" aria-label="关闭">x</button></header>
  <div class="tools"><span class="grip"></span>
    <button class="tool drop" aria-label="定位"><svg><use href="#i-quad-ed"/></svg></button>
    <button class="tool" aria-label="旋转点"><svg><use href="#i-pivot"/></svg></button>
    <button class="tool" aria-label="冲压方向"><svg><use href="#i-dir"/></svg></button>
    <button class="tool" aria-label="卷料"><svg><use href="#i-roll"/></svg></button>
  </div>
</section>

<section class="palette p-locate">
  <header><h2>定位</h2><button class="close" aria-label="关闭">x</button></header>
  <div class="tools"><span class="grip"></span>
    <button class="tool" aria-label="定位编辑器"><svg><use href="#i-quad-ed"/></svg></button>
    <button class="tool" aria-label="多件定位"><svg><use href="#i-quad-ed"/></svg></button>
    <button class="tool" aria-label="移动"><svg><use href="#i-box"/></svg></button>
    <button class="tool" aria-label="布局"><svg><use href="#i-quad"/></svg></button>
  </div>
</section>

<section class="palette p-bead">
  <header><h2>拉延筋</h2><button class="close" aria-label="关闭">x</button></header>
  <div class="tools"><span class="grip"></span>
    <button class="tool" aria-label="圆形筋"><svg><use href="#i-beadD"/></svg></button>
    <button class="tool" aria-label="锁死筋"><svg><use href="#i-lockD"/></svg></button>
    <button class="tool" aria-label="台阶筋"><svg><use href="#i-step"/></svg></button>
    <button class="tool" aria-label="梯形筋"><svg><use href="#i-trap"/></svg></button>
    <button class="tool" aria-label="圆形筋定义"><svg><use href="#i-bead"/></svg></button>
  </div>
</section>

<section class="palette p-analyse">
  <header><h2>分析</h2><button class="close" aria-label="关闭">x</button></header>
  <div class="tools"><span class="grip"></span>
    <button class="tool" aria-label="拔模分析"><svg><use href="#i-an1"/></svg></button>
    <button class="tool" aria-label="曲面分析"><svg><use href="#i-an2"/></svg></button>
    <button class="tool" aria-label="角度分析"><svg><use href="#i-an3"/></svg></button>
    <button class="tool" aria-label="深度分析"><svg><use href="#i-an4"/></svg></button>
  </div>
</section>

<section class="palette p-plan">
  <header><h2>工艺规划</h2><button class="close" aria-label="关闭">x</button></header>
  <div class="tools"><span class="grip"></span>
    <button class="tool" aria-label="工序编辑器"><svg><use href="#i-plan"/></svg></button>
    <button class="tool" aria-label="工序"><svg><use href="#i-plan2"/></svg></button>
  </div>
</section>

<section class="palette p-patch">
  <header><h2>补面</h2><button class="close" aria-label="关闭">x</button></header>
  <div class="tools"><span class="grip"></span>
    <button class="tool" aria-label="补丁面定义"><svg><use href="#i-patch"/></svg></button>
    <button class="tool" aria-label="角部桥接定义"><svg><use href="#i-corner"/></svg></button>
    <button class="tool" aria-label="藏料包定义"><svg><use href="#i-pocket"/></svg></button>
    <button class="tool" aria-label="切边刀架定义"><svg><use href="#i-knife"/></svg></button>
  </div>
</section>

<section class="palette p-pierce">
  <header><h2>冲孔</h2><button class="close" aria-label="关闭">x</button></header>
  <div class="tools"><span class="grip"></span>
    <button class="tool" aria-label="冲孔编辑器"><svg><use href="#i-pierce-ed"/></svg></button>
    <button class="tool" aria-label="冲孔定义"><svg><use href="#i-pierce"/></svg></button>
  </div>
</section>

<section class="palette p-prep">
  <header><h2>零件准备</h2><button class="close" aria-label="关闭">x</button></header>
  <div class="tools"><span class="grip"></span>
    <button class="tool drop" aria-label="填孔"><svg><use href="#i-prep1"/></svg></button>
    <button class="tool drop" aria-label="展开"><svg><use href="#i-prep2"/></svg></button>
    <button class="tool drop" aria-label="曲面"><svg><use href="#i-prep3"/></svg></button>
  </div>
</section>

<section class="palette p-ref">
  <header><h2>工艺设计基准</h2><button class="close" aria-label="关闭">x</button></header>
  <div class="tools"><span class="grip"></span>
    <button class="tool" aria-label="曲线点"><svg><use href="#i-ref1"/></svg></button>
    <button class="tool" aria-label="曲面点"><svg><use href="#i-ref2"/></svg></button>
    <button class="tool" aria-label="曲面线"><svg><use href="#i-ref3"/></svg></button>
    <button class="tool" aria-label="边线"><svg><use href="#i-ref4"/></svg></button>
    <button class="tool" aria-label="旋转"><svg><use href="#i-ref5"/></svg></button>
    <button class="tool" aria-label="平移"><svg><use href="#i-ref6"/></svg></button>
    <button class="tool" aria-label="投影"><svg><use href="#i-ref7"/></svg></button>
  </div>
</section>

</body>
</html>
```
FILE: styles.css
```css
* { box-sizing: border-box; }

body {
  margin: 0;
  height: 100vh;
  display: flex;
  overflow: hidden;
  position: relative;
  font: 12px/16px "Noto Sans", "Noto Sans CJK SC", sans-serif;
  color: #111;
}

button, select {
  font: inherit;
  color: inherit;
  margin: 0;
  padding: 0;
  border: 0;
  background: none;
}

ul {
  margin: 0;
  padding: 0;
  list-style: none;
}

.paints {
  position: absolute;
  width: 0;
  height: 0;
}

.sprite { display: none; }

/* icon paints */
.g { fill: url(#steel); stroke: #2e2e2e; }
.o { fill: url(#amber); stroke: #6b3b00; }
.l { fill: none; stroke: #151515; }
.soft { stroke: #777; }
.fat { stroke-width: 2; }
.ol { fill: none; stroke: #ee8b10; stroke-width: 1.5; }
.thin { stroke-width: 1; }
.wide { stroke-width: 2; }
.bl, .bn { fill: none; stroke: #94622a; }
.dash { fill: none; stroke: #000; stroke-dasharray: 2 1; }
.iconD { font: bold 12px "DejaVu Sans", sans-serif; fill: #000; }
.iconB { font: bold 17px "Liberation Sans", sans-serif; fill: #222; }
.fx { font: italic bold 20px "Liberation Serif", serif; }
.fx-arg { font: bold 12px "Liberation Serif", serif; }
.attr { font: 9px "Liberation Mono", monospace; fill: #e3217f; }

/* desktop taskbar */
.taskbar {
  flex: 0 0 10px;
  display: flex;
  flex-direction: column;
  overflow: hidden;
  border-right: 1px solid #0d2847;
  background: linear-gradient(#174b8c, #1d5a9c 30%, #2690c8 55%, #2390c6 75%, #1e6b98 88%, #2270a0);
}

.task {
  flex: 0 0 44px;
  margin-bottom: 4px;
  border: 1px solid #7eb0d8;
  border-left: 0;
  background: linear-gradient(135deg, #1d5793, #3780ba);
}

.task.t1 { margin-top: 110px; }

.task.active {
  border-color: #d6eefa;
  background: linear-gradient(#8cb8d6, #d8ebf5 50%, #85b8da);
}

.tray {
  flex: 0 0 52px;
  display: flex;
  align-items: center;
  margin-top: auto;
  border-top: 1px solid #9dc6dd;
  border-bottom: 1px solid #123f62;
  background: #1f6189;
}

.battery {
  width: 8px;
  height: 18px;
  margin-top: 20px;
  border: 1px solid #7dff3f;
  border-left: 0;
  background: #12831f;
}

.clock {
  flex: 0 0 170px;
  display: flex;
  align-items: flex-end;
  padding-bottom: 16px;
  color: #fff;
}

/* application frame */
.app {
  flex: 1;
  min-width: 0;
  display: flex;
  flex-direction: column;
}

.app-icon {
  width: 18px;
  height: 16px;
}

.titlebar {
  height: 21px;
  display: flex;
  align-items: center;
  gap: 4px;
  padding: 2px 0 0 2px;
  border-bottom: 1px solid #c6d8ea;
  background:
    radial-gradient(circle at 210px 18px, #b8485a 0, #a65f7466 16px, transparent 28px),
    radial-gradient(circle at 262px 22px, #a34b52 0, transparent 18px),
    radial-gradient(circle at 345px 26px, #d5bb6c 0, transparent 24px),
    radial-gradient(circle at 425px 26px, #4b9bc4 0, transparent 26px),
    radial-gradient(circle at 578px 24px, #2f9db8 0, transparent 24px),
    radial-gradient(circle at 653px 18px, #7fb0d8 0, transparent 24px),
    linear-gradient(90deg, #9db5cf, #8da9c8 160px, #3d6da3 230px, #1d5590 400px, #1d5590);
}

.titlebar .app-icon {
  width: 15px;
  height: 14px;
}

.menubar {
  height: 20px;
  display: flex;
  padding: 0 0 0 2px;
  border-top: 1px solid #1b2b48;
  background: #d0cfe6;
}

.menubar .app-icon {
  width: 20px;
  margin-top: 1px;
}

.menu-item {
  position: relative;
  width: 38px;
}

.menu-item > button {
  width: 38px;
  height: 19px;
  text-align: center;
}

.menu-item > .start { background: #fde3b9; }

.menu-item > .open {
  background: #3399ff;
  color: #fff;
}

.menu {
  position: absolute;
  z-index: 20;
  top: 19px;
  left: 0;
  width: 172px;
  padding: 2px 5px 3px 1px;
  border: 1px solid #8e8e9c;
  border-top-color: #f4f4fa;
  border-left-color: #f4f4fa;
  background: linear-gradient(90deg, #d2d1e9, #d6d5eb 50%, #e7e7f3);
  box-shadow: 3px 3px 4px rgba(0, 0, 0, .6);
}

.menu li { position: relative; }

.menu li > button {
  width: 100%;
  height: 24px;
  display: flex;
  align-items: center;
  padding-left: 25px;
  text-align: left;
  white-space: nowrap;
}

.menu button svg {
  flex: none;
  width: 22px;
  height: 22px;
  margin: 0 2px 0 -24px;
}

.menu button:disabled {
  color: #a09fae;
  text-shadow: 1px 1px #fff;
}

.menu .sep {
  height: 9px;
  padding-top: 3px;
}

.menu .sep::before {
  content: "";
  display: block;
  height: 2px;
  border-top: 1px solid #9a9aa8;
  border-bottom: 1px solid #fff;
}

.more::after {
  content: "";
  margin: 0 4px 2px auto;
  border: 4px solid transparent;
  border-left: 5px solid currentColor;
  border-right: 0;
}

.menu .current {
  background: #3399ff;
  color: #fff;
}

.submenu {
  top: -64px;
  left: 164px;
  width: 208px;
  padding: 1px 2px;
}

/* toolbars */
.toolbar {
  display: flex;
  align-items: center;
  overflow: hidden;
  background: linear-gradient(#fff, #f1f1f8 10%, #d8d7eb 35%, #cfcfe4 70%, #9090a7);
}

.toolbar.top {
  height: 38px;
  gap: 3px;
  padding-left: 513px;
  border-bottom: 2px solid #6f6f70;
}

.grip {
  flex: none;
  align-self: flex-start;
  width: 3px;
  height: 17px;
  border-left: 2px solid #fff;
  border-right: 1px solid #94949f;
}

.top .grip {
  margin: 4px 6px 0 0;
}

.pick {
  flex: none;
  position: relative;
  width: 68px;
  height: 25px;
  background: #fff;
}

.pick::after {
  content: "";
  position: absolute;
  right: 4px;
  top: 11px;
  border: 4px solid transparent;
  border-top-color: #000;
  border-bottom: 0;
  pointer-events: none;
}

.pick select {
  appearance: none;
  width: 100%;
  height: 100%;
  padding: 0 19px 0 6px;
}

.pick.raised {
  border: 1px solid #77777c;
  border-radius: 3px;
  background: linear-gradient(#f0f0f0, #d2d2d4);
}

.pick.raised select { padding-left: 4px; }
.pick.raised::after { top: 10px; }

.pick.short { width: 44px; }

.pick.off { background: #e9e9f2; }
.pick.off select { color: #999; opacity: 1; }
.pick.off::after { border-top-color: #999; }

.tool {
  flex: none;
  position: relative;
  width: 28px;
  height: 28px;
}

.tool svg {
  display: block;
  width: 22px;
  height: 22px;
  margin: 0 3px;
}

.top .tool { width: 24px; }
.top .tool svg { margin: 0; }

.tool.drop { margin-right: 2px; }

.tool.drop::after {
  content: "";
  position: absolute;
  right: -1px;
  bottom: -1px;
  border: 4px solid transparent;
  border-top-color: #000;
  border-bottom: 0;
}

.toolbar.bottom {
  height: 37px;
  padding: 2px 0 0 7px;
}

.bottom .grip { margin: 3px 7px 0 9px; }
.bottom .grip:first-child { margin: 3px 6px 0 0; }
.bottom .tool.thin { width: 22px; }
.bottom .tool.thin svg { margin: 0; }
.bottom .gap { flex: 0 0 200px; }

.status {
  height: 25px;
  padding: 3px 4px;
  border-top: 1px solid #55555c;
  background: #d0cfe6;
  white-space: nowrap;
}

/* 3D view */
.viewport {
  flex: 1;
  min-height: 0;
  position: relative;
  overflow: hidden;
  border-left: 2px solid #6f6f78;
  background: linear-gradient(#333366, #3f3d70 34%, #4a4878 60%, #5a5884 72%, #adacc1);
}

.scene {
  position: absolute;
  top: 0;
  left: -2px;
  width: calc(100% + 2px);
  height: 100%;
}

.tree {
  position: relative;
  padding-left: 27px;
  font-size: 20px;
  color: #fff;
}

.tree.root {
  padding: 1px 0 0 2px;
}

.tree li {
  position: relative;
}

/* vertical branch */
.tree li::before {
  content: "";
  position: absolute;
  top: -8px;
  bottom: 0;
  left: 8px;
  width: 2px;
  background: #fff;
}

.tree li:last-child::before {
  bottom: auto;
  height: 28px;
}

.tree .part::before { display: none; }

.row {
  position: relative;
  height: 38px;
  display: flex;
  align-items: center;
  padding-left: 26px;
}

/* horizontal branch */
.row::before {
  content: "";
  position: absolute;
  left: 8px;
  top: 18px;
  width: 16px;
  height: 2px;
  background: #fff;
}

.row svg {
  flex: none;
  width: 30px;
  height: 28px;
  position: relative;
}

.row span {
  margin-left: 4px;
  padding-right: 2px;
  line-height: 28px;
  white-space: pre;
  background: rgba(48, 46, 98, .7);
}

.row .active {
  text-decoration: underline;
  text-underline-offset: 2px;
}

.tree .tree .row svg { width: 31px; }
.tree .tree .tree .row svg { margin-left: -1px; }

.part .row {
  padding-left: 0;
}

.part .row::before { display: none; }
.part .row svg { width: 30px; height: 30px; }

.knob {
  position: relative;
  flex: none;
  width: 18px;
  height: 18px;
  margin-left: -26px;
  margin-right: 8px;
  border-radius: 50%;
  background:
    linear-gradient(#000, #000) center / 12px 3px no-repeat,
    radial-gradient(circle at 35% 30%, #ccc, #6a6a6a);
}

.knob.plus {
  background:
    linear-gradient(#000, #000) center / 12px 3px no-repeat,
    linear-gradient(#000, #000) center / 3px 12px no-repeat,
    radial-gradient(circle at 35% 30%, #ccc, #6a6a6a);
}

/* floating palettes */
.palette {
  position: absolute;
  padding: 3px 4px 4px;
  border: 1px solid #1b2422;
  outline: 1px solid #fff;
  outline-offset: -2px;
  background: linear-gradient(120deg, #b0c2c3, #c5d3d4 30%, #acbfbc 60%, #bccbcd);
  box-shadow: 2px 4px 8px 3px rgba(10, 15, 10, .65);
}

.palette.navy {
  background: linear-gradient(90deg, #9098b0, #858dab 20%, #566084 50%, #566084 65%, #8089a3);
}

.palette.half {
  background: linear-gradient(110deg, #b5c2c6, #a8b5ba 35%, #77809b 60%, #9aa3b3);
}

.palette header {
  height: 20px;
  display: flex;
  justify-content: space-between;
}

.palette h2 {
  margin: 0 0 0 2px;
  font: inherit;
  line-height: 18px;
  white-space: nowrap;
  text-shadow: 0 0 6px #dde4ee, 0 0 6px #dde4ee;
}

.close {
  width: 19px;
  height: 19px;
  border: 1px solid #6b4a4a;
  outline: 1px solid #dcb8b0;
  outline-offset: -2px;
  background: linear-gradient(#eba497, #e07a68 48%, #cf4530 52%, #dc6a50);
  color: #fff;
  font: bold 11px/14px "Liberation Sans", sans-serif;
  text-shadow: 0 0 1px #000, 0 0 1px #000;
}

.tools {
  height: 41px;
  display: flex;
  align-items: center;
  padding: 2px 4px 0 4px;
  border: 1px solid #000;
  outline: 1px solid #fff;
  background: linear-gradient(#fff, #ecebf6 15%, #d3d2e8 45%, #cdcce3 70%, #9a99b2);
}

.tools .grip { margin: 2px 7px 0 0; }

.p-draw { left: 611px; top: 83px; }
.p-trim { left: 615px; top: 160px; }
.p-fix { left: 871px; top: 157px; }
.p-trimdesign { left: 617px; top: 239px; }
.p-position { left: 807px; top: 238px; }
.p-locate { left: 620px; top: 321px; }
.p-bead { left: 773px; top: 325px; }
.p-analyse { left: 624px; top: 401px; }
.p-plan { left: 827px; top: 404px; }
.p-patch { left: 629px; top: 485px; }
.p-pierce { left: 801px; top: 502px; }
.p-prep { left: 896px; top: 506px; }
.p-ref { left: 623px; top: 583px; }
```
